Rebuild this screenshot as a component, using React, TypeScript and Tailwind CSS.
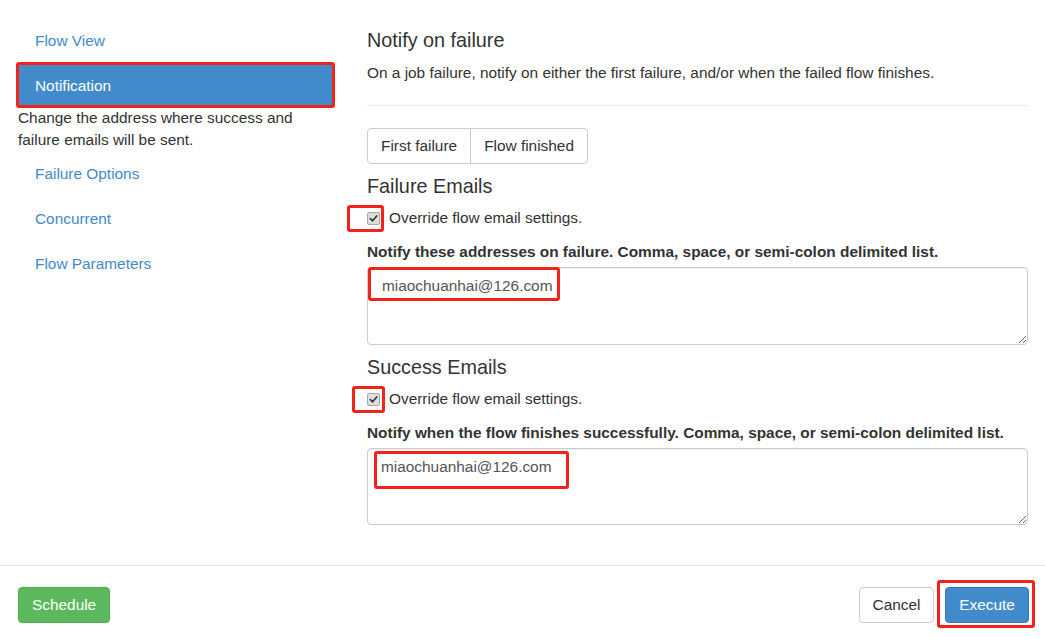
import { useState } from "react";

const navItems = [
  { key: "flow", label: "Flow View" },
  { key: "notification", label: "Notification" },
  { key: "failure", label: "Failure Options" },
  { key: "concurrent", label: "Concurrent" },
  { key: "params", label: "Flow Parameters" },
];

const email = "miaochuanhai@126.com";

function Mark({ className }: { className: string }) {
  // red annotation box drawn over the screenshot
  return (
    <span
      className={`pointer-events-none absolute rounded-[3px] border-[3px] border-[#f5221b] ${className}`}
    />
  );
}

function CheckBox() {
  return (
    <span className="flex h-[13px] w-[13px] items-center justify-center rounded-[2px] border border-[#a8a8a8] bg-[#dedede]">
      <svg viewBox="0 0 10 10" className="h-[9px] w-[9px]">
        <path
          d="M1.5 5.2 L4 7.6 L8.6 2.2"
          fill="none"
          stroke="#333"
          strokeWidth="1.8"
          strokeLinecap="round"
          strokeLinejoin="round"
        />
      </svg>
    </span>
  );
}

export default function App() {
  const [active] = useState("notification");

  return (
    <div className="h-[639px] w-[1045px] overflow-hidden bg-white font-['Liberation_Sans',Arial,sans-serif] text-[15.4px] text-[#333]">
      <div className="flex h-[565px]">
        <div className="flex w-[367px] shrink-0 flex-col gap-[1px] pl-[18px] pt-[18px]">
          {navItems.map((item) => {
            const isActive = item.key === active;
            return (
              <div key={item.key} className="w-[315px]">
                <div
                  className={`relative flex h-[44px] items-center rounded-[4px] px-[17px] pt-[1px] ${
                    isActive ? "bg-[#428bca] text-white" : "text-[#428bca]"
                  }`}
                >
                  {item.label}
                  {isActive && (
                    <Mark className="-left-[2px] -top-[1px] h-[46px] w-[319px]" />
                  )}
                </div>
                {isActive && (
                  <p className="leading-[21.5px] text-[#333]">
                    Change the address where success and
                    <br />
                    failure emails will be sent.
                  </p>
                )}
              </div>
            );
          })}
        </div>

        <div className="flex w-[661px] shrink-0 flex-col pt-[28px]">
          <h4 className="text-[19.8px] leading-[24px]">Notify on failure</h4>
          <p className="mt-[10px] leading-[22px]">
            On a job failure, notify on either the first failure, and/or when
            the failed flow finishes.
          </p>
          <div className="mt-[21px] h-px bg-[#eeeeee]" />

          <div className="mt-[22px] flex h-[36px]">
            <button
              type="button"
              className="rounded-l-[4px] border border-[#cccccc] bg-white px-[13px] leading-[22px]"
            >
              First failure
            </button>
            <button
              type="button"
              className="-ml-px rounded-r-[4px] border border-[#cccccc] bg-white px-[13px] leading-[22px]"
            >
              Flow finished
            </button>
          </div>

          <h4 className="mt-[11px] text-[19.8px] leading-[22px]">
            Failure Emails
          </h4>
          <label className="relative mt-[10px] flex h-[22px] items-center gap-[9px]">
            <CheckBox />
            <span>Override flow email settings.</span>
            <Mark className="-left-[20px] -top-[2px] h-[27px] w-[37px]" />
          </label>
          <p className="mt-[12px] font-bold leading-[22px]">
            Notify these addresses on failure. Comma, space, or semi-colon
            delimited list.
          </p>
          <div className="relative mt-[4px]">
            <textarea
              readOnly
              defaultValue={email}
              className="block h-[78px] w-full rounded-[4px] border border-[#cccccc] px-[14px] py-[7px] leading-[22px] text-[#555] shadow-[inset_0_1px_1px_rgba(0,0,0,0.075)] outline-none"
            />
            <Mark className="left-[1px] top-0 h-[34px] w-[192px]" />
          </div>

          <h4 className="mt-[11px] text-[19.8px] leading-[22px]">
            Success Emails
          </h4>
          <label className="relative mt-[10px] flex h-[22px] items-center gap-[9px]">
            <CheckBox />
            <span>Override flow email settings.</span>
            <Mark className="-left-[15px] -top-[2px] h-[27px] w-[33px]" />
          </label>
          <p className="mt-[12px] font-bold leading-[22px]">
            Notify when the flow finishes successfully. Comma, space, or
            semi-colon delimited list.
          </p>
          <div className="relative mt-[4px]">
            <textarea
              readOnly
              defaultValue={email}
              className="block h-[77px] w-full rounded-[4px] border border-[#cccccc] px-[13px] py-[7px] leading-[22px] text-[#555] shadow-[inset_0_1px_1px_rgba(0,0,0,0.075)] outline-none"
            />
            <Mark className="left-[7px] top-[3px] h-[38px] w-[195px]" />
          </div>
        </div>
      </div>

      <div className="flex items-start justify-between border-t border-[#e5e5e5] pl-[18px] pr-[16px] pt-[21px]">
        <button
          type="button"
          className="h-[36px] rounded-[4px] border border-[#4cae4c] bg-[#5cb85c] px-[13px] text-white"
        >
          Schedule
        </button>
        <div className="flex gap-[11px]">
          <button
            type="button"
            className="h-[36px] w-[75px] rounded-[4px] border border-[#cccccc] bg-white text-[#333]"
          >
            Cancel
          </button>
          <div className="relative">
            <button
              type="button"
              className="h-[36px] w-[84px] rounded-[4px] border border-[#357ebd] bg-[#428bca] text-white"
            >
              Execute
            </button>
            <Mark className="-left-[8px] -top-[7px] h-[48px] w-[98px]" />
          </div>
        </div>
      </div>
    </div>
  );
}
